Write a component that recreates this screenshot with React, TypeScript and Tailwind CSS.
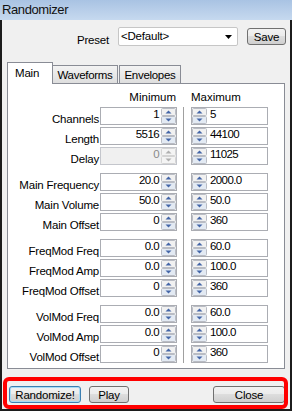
import React from "react";

type RowData = { label: string; min: string; max: string; disabled?: boolean };

const groups: RowData[][] = [
  [
    { label: "Channels", min: "1", max: "5" },
    { label: "Length", min: "5516", max: "44100" },
    { label: "Delay", min: "0", max: "11025", disabled: true },
  ],
  [
    { label: "Main Frequency", min: "20.0", max: "2000.0" },
    { label: "Main Volume", min: "50.0", max: "50.0" },
    { label: "Main Offset", min: "0", max: "360" },
  ],
  [
    { label: "FreqMod Freq", min: "0.0", max: "60.0" },
    { label: "FreqMod Amp", min: "0.0", max: "100.0" },
    { label: "FreqMod Offset", min: "0", max: "360" },
  ],
  [
    { label: "VolMod Freq", min: "0.0", max: "60.0" },
    { label: "VolMod Amp", min: "0.0", max: "100.0" },
    { label: "VolMod Offset", min: "0", max: "360" },
  ],
];

function Spinner({ disabled }: { disabled?: boolean }) {
  const arrow = disabled ? "#b0b0b0" : "#4466a8";
  const stroke = disabled ? "#d4d4d4" : "#b9bcc4";
  return (
    <svg width="15" height="16" viewBox="0 0 15 16" className="block shrink-0">
      <rect x="0.5" y="0.5" width="14" height="7" rx="1" fill={disabled ? "#f4f4f4" : "#f1f1f1"} stroke={stroke} />
      <rect x="0.5" y="8.5" width="14" height="7" rx="1" fill={disabled ? "#f4f4f4" : "#e3eaf3"} stroke={stroke} />
      <path d="M4.5 5.5 L7.5 2.5 L10.5 5.5 Z" fill={arrow} />
      <path d="M4.5 10.5 L7.5 13.5 L10.5 10.5 Z" fill={arrow} />
    </svg>
  );
}

function MinBox({ v, disabled }: { v: string; disabled?: boolean }) {
  return (
    <div
      className={
        disabled
          ? "w-[77px] h-[18px] border border-[#c4c6cc] bg-[#f0f0f0] flex"
          : "w-[77px] h-[18px] border border-[#abadb3] bg-white flex"
      }
    >
      <div
        className={
          disabled
            ? "flex-1 text-right pr-[2px] text-[11.5px] leading-[12px] tracking-[-0.6px] text-[#8a8a8a]"
            : "flex-1 text-right pr-[2px] text-[11.5px] leading-[12px] tracking-[-0.6px] text-black"
        }
      >
        {v}
      </div>
      <Spinner disabled={disabled} />
    </div>
  );
}

function MaxBox({ v }: { v: string }) {
  return (
    <div className="w-[77px] h-[18px] border border-[#abadb3] bg-white flex">
      <Spinner />
      <div className="flex-1 pl-[3px] text-[11.5px] leading-[12px] tracking-[-0.6px] text-black">{v}</div>
    </div>
  );
}

const btn =
  "h-[17px] border border-[#707070] rounded-[3px] bg-[linear-gradient(to_bottom,#f2f2f2_0%,#ebebeb_50%,#dddddd_50%,#cfcfcf_100%)] text-[11.5px] leading-[12px] tracking-[-0.2px] flex items-center justify-center text-black";

export default function App() {
  return (
    <div className="relative w-[292px] h-[411px] overflow-hidden flex flex-col font-['Liberation_Sans',Arial,sans-serif] text-black">
      {/* title bar */}
      <div className="h-[20px] shrink-0 bg-[linear-gradient(to_bottom,#a9c3e3,#c6d9ef)] pl-[2px] flex items-center">
        <span className="text-[13px] leading-[14px] tracking-[-0.4px] text-[#111]">Randomizer</span>
      </div>

      {/* body */}
      <div className="flex-1 flex flex-col bg-[#f0f0f0] border-l-2 border-r-2 border-b-2 border-[#1c1c1c]">
        {/* preset row */}
        <div className="mt-[7px] h-[19px] flex pl-[67px]">
          <div className="w-[40px] text-right mt-[7px] text-[11.5px] leading-[12px] tracking-[-0.2px]">Preset</div>
          <div className="ml-[9px] w-[120px] h-[19px] border border-[#c6c6c6] rounded-[2px] bg-white flex items-start">
            <span className="pl-[2px] pt-[2px] text-[11.5px] leading-[12px] tracking-[-0.2px]">&lt;Default&gt;</span>
            <svg width="7" height="4" viewBox="0 0 7 4" className="ml-auto mr-[5px] mt-[7px] block">
              <path d="M0 0 L7 0 L3.5 4 Z" fill="#000" />
            </svg>
          </div>
          <div className={"ml-[9px] mt-[1px] w-[39px] " + btn}>Save</div>
        </div>

        {/* tabs */}
        <div className="mt-[16px] ml-[5px] h-[21px] flex items-end">
          <div className="relative z-10 w-[46px] h-[22px] -mb-[1px] border border-b-0 border-[#898c95] bg-white pl-[7px] pt-[4px] text-[11.5px] leading-[12px] tracking-[-0.2px]">
            Main
          </div>
          <div className="w-[65px] h-[18px] border-t border-r border-[#898c95] bg-[linear-gradient(to_bottom,#f3f3f3,#dedede)] text-center pt-[3px] text-[11.5px] leading-[12px] tracking-[-0.3px]">
            Waveforms
          </div>
          <div className="ml-[1px] w-[62px] h-[18px] border-t border-l border-r border-[#898c95] bg-[linear-gradient(to_bottom,#f3f3f3,#dedede)] text-center pt-[3px] text-[11.5px] leading-[12px] tracking-[-0.3px]">
            Envelopes
          </div>
        </div>

        {/* panel */}
        <div className="ml-[5px] w-[278px] h-[286px] border border-[#898c95] bg-white flex">
          <div className="w-[169px] flex flex-col">
            <div className="h-[23px] pt-[7px] pr-[1px] text-right text-[11.5px] leading-[12px]">Minimum</div>
            <div className="flex flex-col gap-[8px]">
              {groups.map((g, gi) => (
                <div key={gi} className="flex flex-col gap-[2px]">
                  {g.map((r) => (
                    <div key={r.label} className="flex h-[18px]">
                      <div className="w-[92px] pr-[1px] flex items-end justify-end whitespace-nowrap text-[11.5px] leading-[12px] tracking-[-0.2px]">
                        {r.label}
                      </div>
                      <MinBox v={r.min} disabled={r.disabled} />
                    </div>
                  ))}
                </div>
              ))}
            </div>
          </div>
          <div className="ml-[6px] mt-[23px] w-px h-[256px] bg-[#a0a0a0]" />
          <div className="ml-[7px] w-[77px] flex flex-col">
            <div className="h-[23px] pt-[7px] text-[11.5px] leading-[12px]">Maximum</div>
            <div className="flex flex-col gap-[8px]">
              {groups.map((g, gi) => (
                <div key={gi} className="flex flex-col gap-[2px]">
                  {g.map((r) => (
                    <MaxBox key={r.label} v={r.max} />
                  ))}
                </div>
              ))}
            </div>
          </div>
        </div>

        {/* buttons */}
        <div className="mt-[17px] flex">
          <div className="ml-[7px] w-[72px] h-[17px] border border-[#3c7fb1] rounded-[3px] shadow-[inset_0_0_0_1px_#a8dcf6] bg-[linear-gradient(to_bottom,#f2f2f2_0%,#ebebeb_50%,#dddddd_50%,#cfcfcf_100%)] text-[11.5px] leading-[12px] tracking-[-0.2px] flex items-center justify-center">
            Randomize!
          </div>
          <div className={"ml-[8px] w-[40px] " + btn}>Play</div>
          <div className={"ml-auto mr-[5px] w-[72px] " + btn}>Close</div>
        </div>
      </div>

      {/* red highlight */}
      <div className="absolute left-[3px] top-[377px] w-[285px] h-[32px] border-4 border-[#ff0000] rounded-[6px] pointer-events-none" />
    </div>
  );
}
